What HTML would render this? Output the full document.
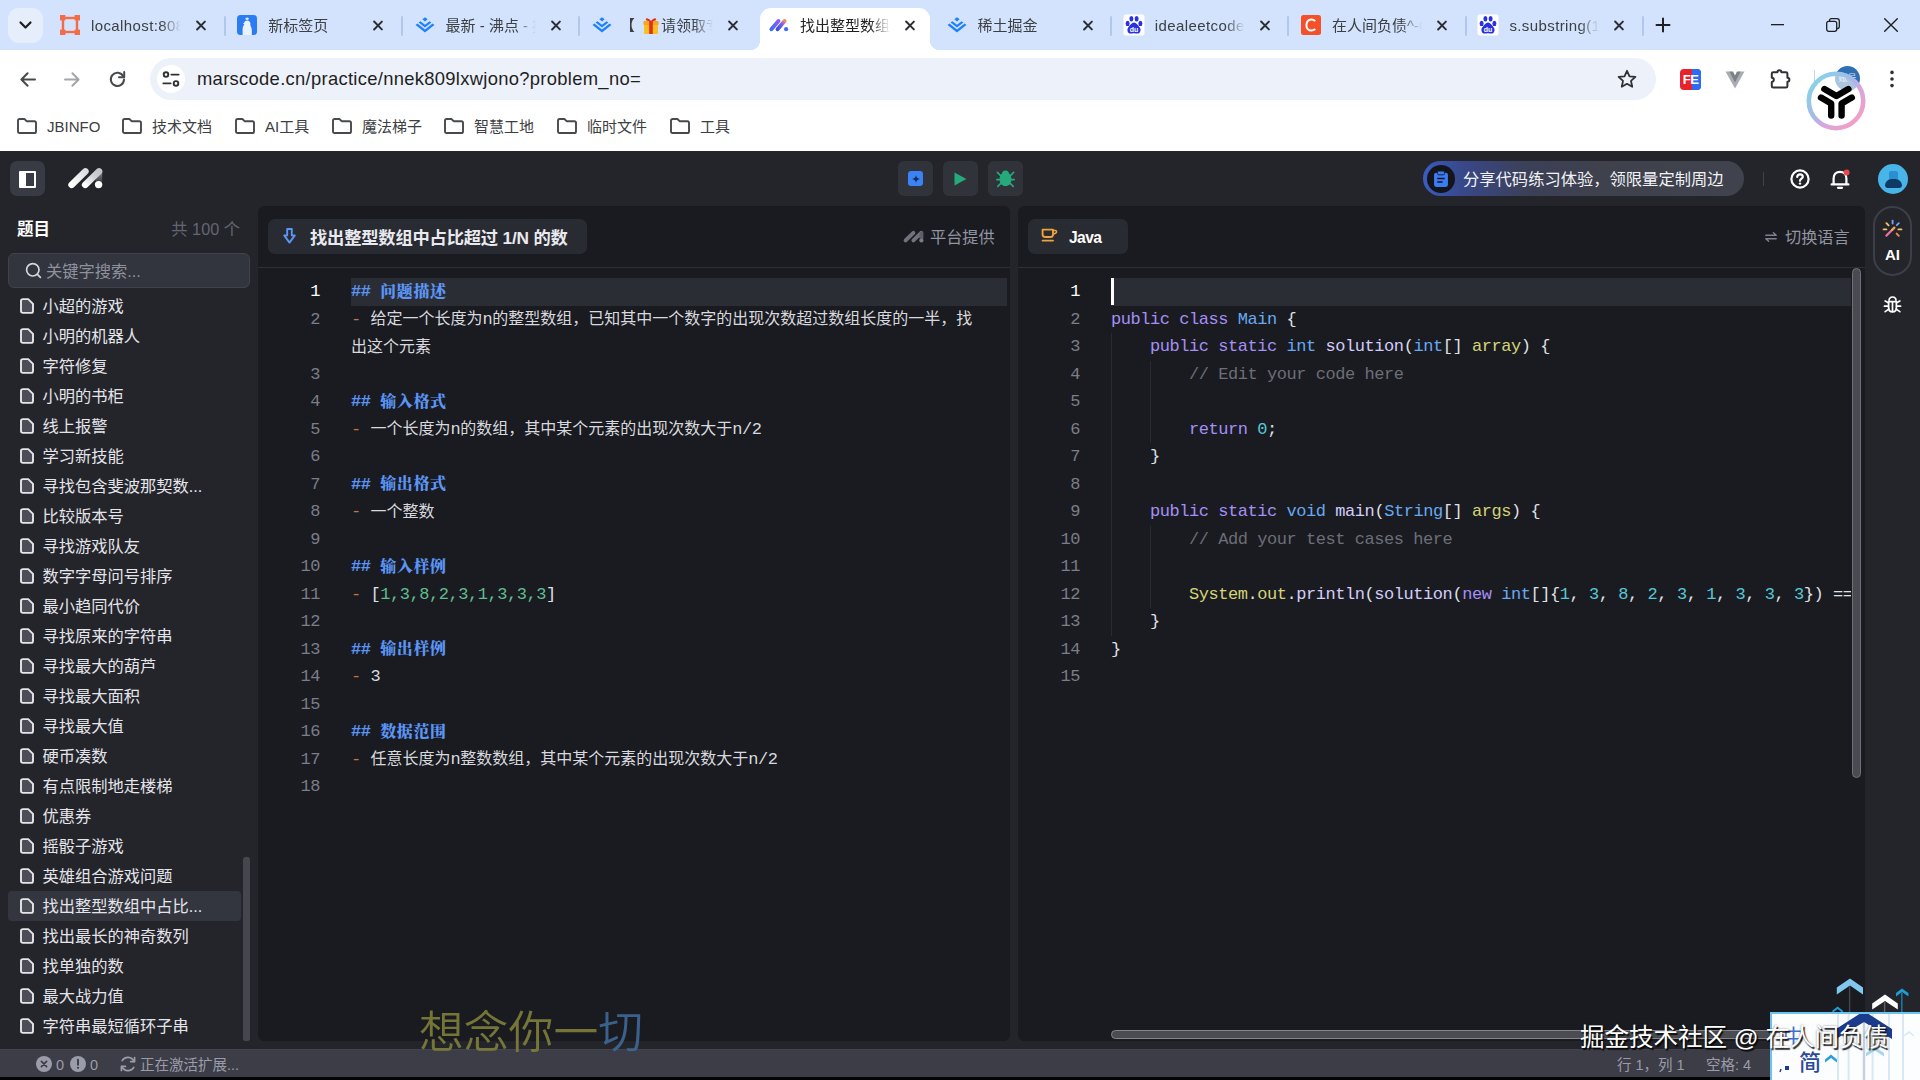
<!DOCTYPE html>
<html lang="zh-CN">
<head>
<meta charset="utf-8">
<title>找出整型数组中占比超过 1/N 的数</title>
<style>
*{box-sizing:border-box;margin:0;padding:0}
html,body{width:1920px;height:1080px;overflow:hidden;background:#fff}
body{position:relative;font-family:"Liberation Sans","Noto Sans CJK SC",sans-serif;color:#1f1f1f}
.abs{position:absolute}
svg{display:block;position:absolute;overflow:visible}
/* ---------- browser chrome ---------- */
#tabbar{position:absolute;left:0;top:0;width:1920px;height:50px;background:#d3e3fd}
#toolbar{position:absolute;left:0;top:50px;width:1920px;height:56px;background:#fff;border-radius:10px 10px 0 0}
#bookmarks{position:absolute;left:0;top:106px;width:1920px;height:45px;background:#fff}
.tsearch{position:absolute;left:8px;top:8px;width:35px;height:35px;border-radius:11px;background:#e6eefc}
.tab{position:absolute;top:8px;height:42px;width:177px}
.tab .tt{position:absolute;left:44px;top:8px;width:90px;height:22px;overflow:hidden;white-space:nowrap;font-size:15px;line-height:20px;color:#3c4043;
 -webkit-mask-image:linear-gradient(90deg,#000 78%,transparent 100%);mask-image:linear-gradient(90deg,#000 78%,transparent 100%)}
.tab .tx{position:absolute;left:146px;top:9px;width:16px;height:16px}
.tab .tx:before,.tab .tx:after{content:"";position:absolute;left:7px;top:1.5px;width:1.9px;height:13px;background:#2b2f33;transform:rotate(45deg);border-radius:1px}
.tab .tx:after{transform:rotate(-45deg)}
.tab .fav{position:absolute;left:11px;top:7px;width:20px;height:20px}
.tsep{position:absolute;top:15.5px;width:2px;height:20px;background:#b3c6ec;border-radius:1px}
#acttab{position:absolute;left:760px;top:8px;width:170px;height:42px;background:#fff;border-radius:11px 11px 0 0}
#acttab:before,#acttab:after{content:"";position:absolute;bottom:0;width:10px;height:10px}
#acttab:before{left:-10px;background:radial-gradient(circle at 0 0,transparent 10px,#fff 10.5px)}
#acttab:after{right:-10px;background:radial-gradient(circle at 100% 0,transparent 10px,#fff 10.5px)}
.urlpill{position:absolute;left:150px;top:8px;width:1506px;height:42px;border-radius:21px;background:#edf1fa}
.url{position:absolute;left:197px;top:16.5px;font-size:18.4px;line-height:24px;color:#1f1f1f;white-space:nowrap;letter-spacing:0.3px}
.bm{position:absolute;top:10px;height:22px;font-size:15px;line-height:22px;color:#3c4043;white-space:nowrap}
.bm svg{left:-30px;top:1.8px}
/* ---------- app ---------- */
#app{position:absolute;left:0;top:151px;width:1920px;height:929px;background:#24252a;color:#e6e6ea;overflow:hidden}

/* header */
.hbtn{position:absolute;top:10px;width:35px;height:35px;border-radius:6px;background:#31333b}
.side-title{position:absolute;left:17px;top:66px;font-size:16.5px;font-weight:700;line-height:24px;color:#fff}
.side-count{position:absolute;right:1680px;top:66px;font-size:16.25px;line-height:24px;color:#636673;white-space:nowrap}
.search{position:absolute;left:8px;top:102px;width:242px;height:35px;border-radius:6px;background:#32343e;border:1px solid #40424d}
.search span{position:absolute;left:37px;top:5px;font-size:16.25px;line-height:24px;color:#8e919d;white-space:nowrap}
.li{position:absolute;left:8px;width:233px;height:30px;border-radius:4px;font-size:16.25px;line-height:30px;color:#e4e5ea;white-space:nowrap}
.li span{position:absolute;left:34.5px;top:-0.5px}
.li svg{left:11.7px;top:7.3px}
.li.sel{background:#34363f}
.panel{position:absolute;top:55px;height:835px;background:#1a1b20;border-radius:6px;overflow:hidden}
.phead{position:absolute;left:0;top:0;right:0;height:62px;border-bottom:1px solid #2d2f37}
.ptab{position:absolute;top:13px;height:35px;border-radius:7px;background:#292b32}
.code{position:absolute;left:0;right:0;font-family:"Liberation Mono","Noto Sans CJK SC",monospace;font-size:17px;letter-spacing:-0.45px;white-space:pre;color:#d8d9de}
.code .ln{position:absolute;height:27.5px;line-height:27.5px}
.code .no{position:absolute;height:27.5px;line-height:27.5px;text-align:right;color:#7b7d89;width:60px}
.code .no.act{color:#fff}
.code .c{letter-spacing:0;font-size:16px;font-family:"Liberation Sans","Noto Sans CJK SC",sans-serif;line-height:0;position:relative;top:0.5px}
.code .hl{position:absolute;height:27.5px;background:#2b2d35}
.h{color:#5b95f6;font-weight:700}
.h .c{font-family:"Liberation Serif","Noto Serif CJK SC",serif;font-weight:900;letter-spacing:0.6px}
.d{color:#c9733d}
.g{color:#5fbe8f}
.kw{color:#a48ff5}.ty{color:#66a9f3}.fn{color:#d3cdfb}.pa{color:#d3d479}.cm{color:#6c6e78}.nu{color:#56c9d6}.pu{color:#dfe0e6}
.guide{position:absolute;width:1px;background:#2a2b32}
.status{position:absolute;left:0;top:898px;width:1920px;height:28.5px;background:#3c3d47;border-top:1px solid #43444e;font-size:14.5px;line-height:28px;color:#9a9ca9;white-space:nowrap}
.status span{position:absolute;top:0.5px}
</style>
</head>
<body>
<div id="tabbar">
  <div class="tsearch"><svg style="left:11px;top:13px" width="13" height="9" viewBox="0 0 13 9"><path d="M1.5 1.5 L6.5 6.5 L11.5 1.5" fill="none" stroke="#1f1f1f" stroke-width="2.2" stroke-linecap="round" stroke-linejoin="round"/></svg></div>
  <div id="acttab"></div>
  <div class="tab" style="left:47.0px"><svg class="fav" style="left:13px" width="20" height="20" viewBox="0 0 20 20"><rect x="3" y="3" width="14" height="14" fill="none" stroke="#f26d47" stroke-width="2.4"/><rect x="0" y="0" width="5.4" height="5.4" fill="#f26d47"/><rect x="14.6" y="0" width="5.4" height="5.4" fill="#f26d47"/><rect x="0" y="14.6" width="5.4" height="5.4" fill="#f26d47"/><rect x="14.6" y="14.6" width="5.4" height="5.4" fill="#f26d47"/></svg><div class="tt" style="color:#3c4043;letter-spacing:0.4px">localhost:8080</div><div class="tx"></div></div>
  <div class="tab" style="left:224.3px"><svg class="fav" style="left:13px" width="20" height="20" viewBox="0 0 20 20"><rect x="0" y="0" width="20" height="20" rx="3.5" fill="#2b7cf2"/><path d="M5.6 20 V14.6 C5.6 12 6.4 10.4 7.4 9.4 L6 8.6 L7.2 7.8 C7.6 6.2 8.8 5.4 10.2 5.4 C12.2 5.4 13.4 6.8 13.4 8.6 C13.4 9.6 13.2 10.2 13.6 11 C14.4 12.4 14.8 13.6 14.8 15.4 V20 Z" fill="#e9f3ff"/><path d="M8.4 2.6 L9.3 3.5 L10.1 2 L10.9 3.5 L11.8 2.6 L11.4 4.8 H8.8 Z" fill="#fff"/></svg><div class="tt" style="color:#3c4043">新标签页</div><div class="tx"></div></div>
  <div class="tab" style="left:401.6px"><svg class="fav" style="left:13px" width="20" height="20" viewBox="0 0 20 20"><path d="M10 2.2 L12.6 4.3 L10 6.4 L7.4 4.3 Z" fill="#1e80ff"/><path d="M3.6 7.6 L10 12.6 L16.4 7.6 L14.6 6.2 L10 9.8 L5.4 6.2 Z" fill="#1e80ff"/><path d="M0.6 10 L10 17.4 L19.4 10 L17.6 8.6 L10 14.5 L2.4 8.6 Z" fill="#1e80ff"/></svg><div class="tt" style="color:#3c4043">最新 - 沸点 - 掘金</div><div class="tx"></div></div>
  <div class="tab" style="left:579.0px"><svg class="fav" style="left:13px" width="20" height="20" viewBox="0 0 20 20"><path d="M10 2.2 L12.6 4.3 L10 6.4 L7.4 4.3 Z" fill="#1e80ff"/><path d="M3.6 7.6 L10 12.6 L16.4 7.6 L14.6 6.2 L10 9.8 L5.4 6.2 Z" fill="#1e80ff"/><path d="M0.6 10 L10 17.4 L19.4 10 L17.6 8.6 L10 14.5 L2.4 8.6 Z" fill="#1e80ff"/></svg><div class="tt" style="color:#3c4043"><span style="margin-left:-3px">【</span><span style="display:inline-block;width:26px"></span>请领取专属<svg style="position:absolute;left:20px;top:1px" width="16" height="18" viewBox="0 0 16 18"><rect x="1" y="6" width="14" height="11" rx="1" fill="#fbbf24"/><rect x="0.4" y="4" width="15.2" height="4" rx="1" fill="#f5a623"/><rect x="6.2" y="4" width="3.6" height="13" fill="#e0301e"/><path d="M8 4 C5 0 2 1 3 3 C3.6 4 6 4 8 4 C10 4 12.4 4 13 3 C14 1 11 0 8 4 Z" fill="#e0301e"/></svg></div><div class="tx"></div></div>
  <div class="tab" style="left:756.0px"><svg class="fav" style="left:13px" width="22" height="20" viewBox="0 0 22 20"><defs><linearGradient id="mg1" x1="0" y1="1" x2="1" y2="0"><stop offset="0" stop-color="#3f6bf6"/><stop offset="1" stop-color="#8a5cf6"/></linearGradient><linearGradient id="mg2" x1="0" y1="1" x2="1" y2="0"><stop offset="0" stop-color="#3a4fe0"/><stop offset="0.6" stop-color="#7b5cf0"/><stop offset="1" stop-color="#f08a6a"/></linearGradient></defs><path d="M2.6 14.6 L10.4 5.6" stroke="url(#mg1)" stroke-width="4.3" stroke-linecap="round" fill="none"/><path d="M9.4 14.6 L17.2 5.6" stroke="url(#mg2)" stroke-width="4.3" stroke-linecap="round" fill="none"/><circle cx="18.8" cy="14.6" r="2.3" fill="#3f6bf6"/></svg><div class="tt" style="color:#1f1f1f">找出整型数组中占比</div><div class="tx"></div></div>
  <div class="tab" style="left:933.5px"><svg class="fav" style="left:13px" width="20" height="20" viewBox="0 0 20 20"><path d="M10 2.2 L12.6 4.3 L10 6.4 L7.4 4.3 Z" fill="#1e80ff"/><path d="M3.6 7.6 L10 12.6 L16.4 7.6 L14.6 6.2 L10 9.8 L5.4 6.2 Z" fill="#1e80ff"/><path d="M0.6 10 L10 17.4 L19.4 10 L17.6 8.6 L10 14.5 L2.4 8.6 Z" fill="#1e80ff"/></svg><div class="tt" style="color:#3c4043">稀土掘金</div><div class="tx"></div></div>
  <div class="tab" style="left:1110.8px"><svg class="fav" style="left:13px" width="20" height="20" viewBox="0 0 20 20"><rect x="-0.5" y="-0.5" width="21" height="21" rx="2.5" fill="#fff"/><ellipse cx="3.6" cy="8.4" rx="2" ry="2.7" fill="#2932e1"/><ellipse cx="7.4" cy="3.8" rx="2" ry="2.7" fill="#2932e1"/><ellipse cx="12.6" cy="3.8" rx="2" ry="2.7" fill="#2932e1"/><ellipse cx="16.4" cy="8.4" rx="2" ry="2.7" fill="#2932e1"/><path d="M10 7.6 C12.4 7.6 13.4 10 15.4 12 C17.6 14.2 16.6 18.6 13.4 18.6 C12 18.6 11.2 18.2 10 18.2 C8.8 18.2 8 18.6 6.6 18.6 C3.4 18.6 2.4 14.2 4.6 12 C6.6 10 7.6 7.6 10 7.6 Z" fill="#2932e1"/><text x="10" y="16.6" font-size="7" font-weight="700" text-anchor="middle" fill="#fff" font-family="Liberation Sans, sans-serif">du</text></svg><div class="tt" style="color:#3c4043;letter-spacing:0.4px">idealeetcode</div><div class="tx"></div></div>
  <div class="tab" style="left:1288.0px"><svg class="fav" style="left:13px" width="20" height="20" viewBox="0 0 20 20"><rect x="0" y="0" width="20" height="20" rx="2.5" fill="#f4502a"/><path d="M14.2 6.2 C13.2 5 12 4.4 10.4 4.4 C7.4 4.4 5.4 6.8 5.4 10 C5.4 13.2 7.4 15.6 10.4 15.6 C12 15.6 13.2 15 14.2 13.8" fill="none" stroke="#fff" stroke-width="2"/></svg><div class="tt" style="color:#3c4043">在人间负债^-C</div><div class="tx"></div></div>
  <div class="tab" style="left:1465.4px"><svg class="fav" style="left:13px" width="20" height="20" viewBox="0 0 20 20"><rect x="-0.5" y="-0.5" width="21" height="21" rx="2.5" fill="#fff"/><ellipse cx="3.6" cy="8.4" rx="2" ry="2.7" fill="#2932e1"/><ellipse cx="7.4" cy="3.8" rx="2" ry="2.7" fill="#2932e1"/><ellipse cx="12.6" cy="3.8" rx="2" ry="2.7" fill="#2932e1"/><ellipse cx="16.4" cy="8.4" rx="2" ry="2.7" fill="#2932e1"/><path d="M10 7.6 C12.4 7.6 13.4 10 15.4 12 C17.6 14.2 16.6 18.6 13.4 18.6 C12 18.6 11.2 18.2 10 18.2 C8.8 18.2 8 18.6 6.6 18.6 C3.4 18.6 2.4 14.2 4.6 12 C6.6 10 7.6 7.6 10 7.6 Z" fill="#2932e1"/><text x="10" y="16.6" font-size="7" font-weight="700" text-anchor="middle" fill="#fff" font-family="Liberation Sans, sans-serif">du</text></svg><div class="tt" style="color:#3c4043;letter-spacing:0.4px">s.substring(1</div><div class="tx"></div></div>
  <div class="tsep" style="left:223.5px"></div>
  <div class="tsep" style="left:400.8px"></div>
  <div class="tsep" style="left:578.2px"></div>
  <div class="tsep" style="left:1110.0px"></div>
  <div class="tsep" style="left:1287.2px"></div>
  <div class="tsep" style="left:1464.6px"></div>
  <div class="tsep" style="left:1641.9px"></div>
  <svg style="left:1656px;top:18px" width="14" height="14" viewBox="0 0 14 14"><path d="M7 0.5 V13.5 M0.5 7 H13.5" stroke="#1f1f1f" stroke-width="2" stroke-linecap="round"/></svg>
  <svg style="left:1771px;top:24px" width="13" height="2" viewBox="0 0 13 2"><rect width="13" height="1.3" fill="#1f1f1f"/></svg>
  <svg style="left:1826px;top:18px" width="14" height="14" viewBox="0 0 14 14"><rect x="0.7" y="3.3" width="10" height="10" rx="2" fill="none" stroke="#1f1f1f" stroke-width="1.3"/><path d="M3.5 3 V2.6 Q3.5 0.7 5.4 0.7 H11 Q13.3 0.7 13.3 3 V8.6 Q13.3 10.5 11.4 10.5 H11" fill="none" stroke="#1f1f1f" stroke-width="1.3"/></svg>
  <svg style="left:1884px;top:18px" width="14" height="14" viewBox="0 0 14 14"><path d="M0.7 0.7 L13.3 13.3 M13.3 0.7 L0.7 13.3" stroke="#1f1f1f" stroke-width="1.4" stroke-linecap="round"/></svg>
</div>
<div id="toolbar">
  <svg style="left:20px;top:22px" width="16" height="15" viewBox="0 0 16 15"><path d="M15 7.5 H2 M7.6 1.2 L1.4 7.5 L7.6 13.8" fill="none" stroke="#474a4d" stroke-width="2" stroke-linecap="round" stroke-linejoin="round"/></svg>
  <svg style="left:64px;top:22px" width="16" height="15" viewBox="0 0 16 15"><path d="M1 7.5 H14 M8.4 1.2 L14.6 7.5 L8.4 13.8" fill="none" stroke="#a3a6aa" stroke-width="2" stroke-linecap="round" stroke-linejoin="round"/></svg>
  <svg style="left:109px;top:21px" width="17" height="17" viewBox="0 0 17 17"><path d="M14.2 5.2 A6.6 6.6 0 1 0 15 8.6" fill="none" stroke="#474a4d" stroke-width="2" stroke-linecap="round"/><path d="M15.2 1 V6.2 H10" fill="none" stroke="#474a4d" stroke-width="2" stroke-linecap="round" stroke-linejoin="round"/></svg>
  <div class="urlpill"></div>
  <div class="abs" style="left:157px;top:15px;width:28px;height:28px;border-radius:14px;background:#fff"></div>
  <svg style="left:162px;top:21px" width="18" height="16" viewBox="0 0 18 16"><circle cx="4" cy="3.6" r="2.3" fill="none" stroke="#303134" stroke-width="1.9"/><path d="M9.4 3.6 H16.6" stroke="#303134" stroke-width="1.9" stroke-linecap="round"/><circle cx="14" cy="12.4" r="2.3" fill="none" stroke="#303134" stroke-width="1.9"/><path d="M1.4 12.4 H8.6" stroke="#303134" stroke-width="1.9" stroke-linecap="round"/></svg>
  <div class="url">marscode.cn/practice/nnek809lxwjono?problem_no=</div>
  <svg style="left:1617px;top:19px" width="20" height="20" viewBox="0 0 20 20"><path d="M10 1.8 L12.5 7.3 L18.4 7.9 L14 11.9 L15.2 17.8 L10 14.8 L4.8 17.8 L6 11.9 L1.6 7.9 L7.5 7.3 Z" fill="none" stroke="#303134" stroke-width="1.8" stroke-linejoin="round"/></svg>
  <div class="abs" style="left:1680px;top:19px;width:21px;height:21px;border-radius:4px;background:#e8212b;overflow:hidden"><div class="abs" style="right:0;top:0;width:9px;height:21px;background:#2a6df4"></div><div class="abs" style="left:0;top:2px;width:21px;text-align:center;font-size:13px;font-weight:700;line-height:17px;color:#fff;letter-spacing:-0.5px">FE</div></div>
  <svg style="left:1725px;top:21px" width="20" height="18" viewBox="0 0 20 18"><path d="M0.5 0.5 H5.5 L10 9.5 L14.5 0.5 H19.5 L10 17.5 Z" fill="#a9adb2"/><path d="M4.4 0.5 H8 L10 4.6 L12 0.5 H15.6 L10 11.4 Z" fill="#7d8187"/></svg>
  <svg style="left:1770px;top:17.5px" width="22" height="22" viewBox="0 0 22 22"><path d="M1.8 9.8 V5.6 Q1.8 4.2 3.2 4.2 H7.4 A2 2 0 0 1 11.4 4.2 H16 Q17.4 4.2 17.4 5.6 V9.8 A2 2 0 0 1 17.4 13.8 V18.2 Q17.4 19.6 16 19.6 H3.2 Q1.8 19.6 1.8 18.2 V13.9 A2.05 2.05 0 0 0 1.8 9.8 Z" fill="none" stroke="#303134" stroke-width="2" stroke-linejoin="round"/></svg>
  <div class="abs" style="left:1814px;top:20px;width:1px;height:18px;background:#c7d3ea"></div>
  <div class="abs" style="left:1835px;top:16px;width:25px;height:25px;border-radius:13px;background:#2f6fb4;color:#cfe0f3;font-size:9px;line-height:25px;text-align:center">账号</div>
  <svg style="left:1889px;top:20px" width="6" height="18" viewBox="0 0 6 18"><circle cx="3" cy="2.4" r="1.8" fill="#303134"/><circle cx="3" cy="9" r="1.8" fill="#303134"/><circle cx="3" cy="15.6" r="1.8" fill="#303134"/></svg>
</div>
<div id="bookmarks">
  <div class="bm" style="left:47px"><svg width="20" height="16" viewBox="0 0 20 16"><path d="M1 2.6 Q1 1 2.6 1 H7.4 L9.6 3.2 H17.4 Q19 3.2 19 4.8 V13.4 Q19 15 17.4 15 H2.6 Q1 15 1 13.4 Z" fill="none" stroke="#474a4d" stroke-width="1.9" stroke-linejoin="round"/></svg>JBINFO</div>
  <div class="bm" style="left:152px"><svg width="20" height="16" viewBox="0 0 20 16"><path d="M1 2.6 Q1 1 2.6 1 H7.4 L9.6 3.2 H17.4 Q19 3.2 19 4.8 V13.4 Q19 15 17.4 15 H2.6 Q1 15 1 13.4 Z" fill="none" stroke="#474a4d" stroke-width="1.9" stroke-linejoin="round"/></svg>技术文档</div>
  <div class="bm" style="left:265px"><svg width="20" height="16" viewBox="0 0 20 16"><path d="M1 2.6 Q1 1 2.6 1 H7.4 L9.6 3.2 H17.4 Q19 3.2 19 4.8 V13.4 Q19 15 17.4 15 H2.6 Q1 15 1 13.4 Z" fill="none" stroke="#474a4d" stroke-width="1.9" stroke-linejoin="round"/></svg>AI工具</div>
  <div class="bm" style="left:362px"><svg width="20" height="16" viewBox="0 0 20 16"><path d="M1 2.6 Q1 1 2.6 1 H7.4 L9.6 3.2 H17.4 Q19 3.2 19 4.8 V13.4 Q19 15 17.4 15 H2.6 Q1 15 1 13.4 Z" fill="none" stroke="#474a4d" stroke-width="1.9" stroke-linejoin="round"/></svg>魔法梯子</div>
  <div class="bm" style="left:474px"><svg width="20" height="16" viewBox="0 0 20 16"><path d="M1 2.6 Q1 1 2.6 1 H7.4 L9.6 3.2 H17.4 Q19 3.2 19 4.8 V13.4 Q19 15 17.4 15 H2.6 Q1 15 1 13.4 Z" fill="none" stroke="#474a4d" stroke-width="1.9" stroke-linejoin="round"/></svg>智慧工地</div>
  <div class="bm" style="left:587px"><svg width="20" height="16" viewBox="0 0 20 16"><path d="M1 2.6 Q1 1 2.6 1 H7.4 L9.6 3.2 H17.4 Q19 3.2 19 4.8 V13.4 Q19 15 17.4 15 H2.6 Q1 15 1 13.4 Z" fill="none" stroke="#474a4d" stroke-width="1.9" stroke-linejoin="round"/></svg>临时文件</div>
  <div class="bm" style="left:700px"><svg width="20" height="16" viewBox="0 0 20 16"><path d="M1 2.6 Q1 1 2.6 1 H7.4 L9.6 3.2 H17.4 Q19 3.2 19 4.8 V13.4 Q19 15 17.4 15 H2.6 Q1 15 1 13.4 Z" fill="none" stroke="#474a4d" stroke-width="1.9" stroke-linejoin="round"/></svg>工具</div>
</div>
<div id="app">
  <div class="abs" style="left:10px;top:10px;width:35px;height:35px;border-radius:7px;background:#383a44"><div class="abs" style="left:8.75px;top:9.5px;width:17.5px;height:17.5px;border:2.3px solid #fff;border-radius:1px"><div class="abs" style="left:0;top:0;width:5.5px;height:13px;background:#fff"></div></div></div>
<svg style="left:67px;top:16px" width="37" height="22" viewBox="0 0 37 22"><defs><linearGradient id="lg1" x1="0" y1="1" x2="1" y2="0"><stop offset="0" stop-color="#fff"/><stop offset="1" stop-color="#dcdde1"/></linearGradient><linearGradient id="lg2" x1="0" y1="1" x2="1" y2="0"><stop offset="0" stop-color="#fff"/><stop offset="0.6" stop-color="#d0d1d6"/><stop offset="1" stop-color="#c4c5cb"/></linearGradient><linearGradient id="lg3" x1="0" y1="0" x2="0" y2="1"><stop offset="0" stop-color="#a5a6ad"/><stop offset="1" stop-color="#6a6c75" stop-opacity="0.4"/></linearGradient></defs><path d="M30 3 L34.6 2.4 Q35.2 3.4 35.2 5 V15 L28.4 14 Z" fill="url(#lg3)"/><path d="M4.6 17.8 L18.4 4.4" stroke="url(#lg1)" stroke-width="6.6" stroke-linecap="round"/><path d="M18.2 17.8 L32 4.4" stroke="url(#lg2)" stroke-width="6.6" stroke-linecap="round"/><circle cx="31.6" cy="17.6" r="3.7" fill="#fff"/></svg>
<div class="hbtn" style="left:898px"><div class="abs" style="left:10px;top:10px;width:15px;height:15px;border-radius:3px;background:#3b82f6"></div><svg style="left:13.5px;top:13.5px" width="8" height="8" viewBox="0 0 8 8"><path d="M4 0 Q4.4 3.6 8 4 Q4.4 4.4 4 8 Q3.6 4.4 0 4 Q3.6 3.6 4 0Z" fill="#1e2a55"/></svg></div>
<div class="hbtn" style="left:943px"><svg style="left:11px;top:10.5px" width="13" height="14" viewBox="0 0 13 14"><path d="M0.5 0.6 L12.4 7 L0.5 13.4 Z" fill="#26a97b"/></svg></div>
<div class="hbtn" style="left:988px"><svg style="left:8px;top:8px" width="19" height="19" viewBox="0 0 19 19"><path d="M9.5 1.4 C11.8 1.4 13 3 13 4.6 C14.8 5.8 15.4 8 15.4 10.4 C15.4 14 13.2 17 9.5 17 C5.8 17 3.6 14 3.6 10.4 C3.6 8 4.2 5.8 6 4.6 C6 3 7.2 1.4 9.5 1.4Z" fill="#26a97b"/><path d="M4.6 6.6 L1.4 3.4 M14.4 6.6 L17.6 3.4 M3.8 10.6 H0.8 M15.2 10.6 H18.2 M4.8 14.4 L1.8 17.4 M14.2 14.4 L17.2 17.4" stroke="#26a97b" stroke-width="1.6" stroke-linecap="round"/></svg></div>
<div class="abs" style="left:1423px;top:10px;width:321px;height:35px;border-radius:18px;background:linear-gradient(90deg,#3a5cc4 0%,#38488a 12%,#3c4058 32%,#3f414d 55%,#40424d 100%)"><div class="abs" style="left:3.5px;top:3.5px;width:28px;height:28px;border-radius:14px;background:#14151b"></div><svg style="left:10.5px;top:9.5px" width="14" height="16" viewBox="0 0 13 15"><rect x="0" y="1.6" width="13" height="13.4" rx="2" fill="#3b7cf6"/><rect x="3.2" y="0" width="6.6" height="3.6" rx="1.2" fill="#3b7cf6" stroke="#14151b" stroke-width="0.8"/><path d="M3 7 H10 M3 10.4 H8" stroke="#14151b" stroke-width="1.4"/></svg><div class="abs" style="left:40px;top:5.5px;font-size:16.3px;line-height:24px;color:#f2f3f7;white-space:nowrap">分享代码练习体验，领限量定制周边</div></div>
<div class="abs" style="left:1763px;top:21px;width:1px;height:14px;background:#3f414c"></div>
<svg style="left:1790px;top:18px" width="20" height="20" viewBox="0 0 20 20"><circle cx="10" cy="10" r="8.6" fill="none" stroke="#fff" stroke-width="2.2"/><path d="M7.2 8 C7.2 6.2 8.4 5.3 10 5.3 C11.6 5.3 12.8 6.3 12.8 7.8 C12.8 9.6 10 9.8 10 11.8" fill="none" stroke="#fff" stroke-width="2.2" stroke-linecap="round"/><circle cx="10" cy="14.6" r="1.2" fill="#fff"/></svg>
<svg style="left:1830px;top:18px" width="20" height="21" viewBox="0 0 20 21"><path d="M3.6 15 V9.4 C3.6 5.4 6.2 2.8 10 2.8 C13.8 2.8 16.4 5.4 16.4 9.4 V15 M1.6 15.4 H18.4 M8 18.8 H12" fill="none" stroke="#fff" stroke-width="2.2" stroke-linecap="round" stroke-linejoin="round"/><circle cx="16.6" cy="3.6" r="3" fill="#e5484d"/></svg>
<div class="abs" style="left:1878px;top:13px;width:30px;height:30px;border-radius:15px;background:#48b4e8;overflow:hidden"><div class="abs" style="left:10.5px;top:7px;width:9px;height:9px;border-radius:2px;background:#2a8fd0"></div><div class="abs" style="left:6.5px;top:14.5px;width:17px;height:9px;border-radius:8px 8px 3px 3px;background:#0f3a66"></div></div>
<div class="side-title">题目</div><div class="side-count">共 100 个</div>
<div class="search"><svg style="left:16px;top:8px" width="17" height="17" viewBox="0 0 17 17"><circle cx="7.8" cy="7.8" r="6.2" fill="none" stroke="#d5d6dc" stroke-width="1.7"/><path d="M12.4 12.4 L15.4 15.4" stroke="#d5d6dc" stroke-width="1.7" stroke-linecap="round"/></svg><span>关键字搜索...</span></div>
<div class="li" style="top:140px"><svg width="14" height="16" viewBox="0 0 14 16"><path d="M1 3 Q1 1.1 3 1.1 H8.2 L13 5.9 V13 Q13 14.9 11 14.9 H3 Q1 14.9 1 13 Z" fill="#4b4d57" stroke="#e6e6ea" stroke-width="1.9" stroke-linejoin="round"/></svg><span>小超的游戏</span></div>
<div class="li" style="top:170px"><svg width="14" height="16" viewBox="0 0 14 16"><path d="M1 3 Q1 1.1 3 1.1 H8.2 L13 5.9 V13 Q13 14.9 11 14.9 H3 Q1 14.9 1 13 Z" fill="#4b4d57" stroke="#e6e6ea" stroke-width="1.9" stroke-linejoin="round"/></svg><span>小明的机器人</span></div>
<div class="li" style="top:200px"><svg width="14" height="16" viewBox="0 0 14 16"><path d="M1 3 Q1 1.1 3 1.1 H8.2 L13 5.9 V13 Q13 14.9 11 14.9 H3 Q1 14.9 1 13 Z" fill="#4b4d57" stroke="#e6e6ea" stroke-width="1.9" stroke-linejoin="round"/></svg><span>字符修复</span></div>
<div class="li" style="top:230px"><svg width="14" height="16" viewBox="0 0 14 16"><path d="M1 3 Q1 1.1 3 1.1 H8.2 L13 5.9 V13 Q13 14.9 11 14.9 H3 Q1 14.9 1 13 Z" fill="#4b4d57" stroke="#e6e6ea" stroke-width="1.9" stroke-linejoin="round"/></svg><span>小明的书柜</span></div>
<div class="li" style="top:260px"><svg width="14" height="16" viewBox="0 0 14 16"><path d="M1 3 Q1 1.1 3 1.1 H8.2 L13 5.9 V13 Q13 14.9 11 14.9 H3 Q1 14.9 1 13 Z" fill="#4b4d57" stroke="#e6e6ea" stroke-width="1.9" stroke-linejoin="round"/></svg><span>线上报警</span></div>
<div class="li" style="top:290px"><svg width="14" height="16" viewBox="0 0 14 16"><path d="M1 3 Q1 1.1 3 1.1 H8.2 L13 5.9 V13 Q13 14.9 11 14.9 H3 Q1 14.9 1 13 Z" fill="#4b4d57" stroke="#e6e6ea" stroke-width="1.9" stroke-linejoin="round"/></svg><span>学习新技能</span></div>
<div class="li" style="top:320px"><svg width="14" height="16" viewBox="0 0 14 16"><path d="M1 3 Q1 1.1 3 1.1 H8.2 L13 5.9 V13 Q13 14.9 11 14.9 H3 Q1 14.9 1 13 Z" fill="#4b4d57" stroke="#e6e6ea" stroke-width="1.9" stroke-linejoin="round"/></svg><span>寻找包含斐波那契数...</span></div>
<div class="li" style="top:350px"><svg width="14" height="16" viewBox="0 0 14 16"><path d="M1 3 Q1 1.1 3 1.1 H8.2 L13 5.9 V13 Q13 14.9 11 14.9 H3 Q1 14.9 1 13 Z" fill="#4b4d57" stroke="#e6e6ea" stroke-width="1.9" stroke-linejoin="round"/></svg><span>比较版本号</span></div>
<div class="li" style="top:380px"><svg width="14" height="16" viewBox="0 0 14 16"><path d="M1 3 Q1 1.1 3 1.1 H8.2 L13 5.9 V13 Q13 14.9 11 14.9 H3 Q1 14.9 1 13 Z" fill="#4b4d57" stroke="#e6e6ea" stroke-width="1.9" stroke-linejoin="round"/></svg><span>寻找游戏队友</span></div>
<div class="li" style="top:410px"><svg width="14" height="16" viewBox="0 0 14 16"><path d="M1 3 Q1 1.1 3 1.1 H8.2 L13 5.9 V13 Q13 14.9 11 14.9 H3 Q1 14.9 1 13 Z" fill="#4b4d57" stroke="#e6e6ea" stroke-width="1.9" stroke-linejoin="round"/></svg><span>数字字母问号排序</span></div>
<div class="li" style="top:440px"><svg width="14" height="16" viewBox="0 0 14 16"><path d="M1 3 Q1 1.1 3 1.1 H8.2 L13 5.9 V13 Q13 14.9 11 14.9 H3 Q1 14.9 1 13 Z" fill="#4b4d57" stroke="#e6e6ea" stroke-width="1.9" stroke-linejoin="round"/></svg><span>最小趋同代价</span></div>
<div class="li" style="top:470px"><svg width="14" height="16" viewBox="0 0 14 16"><path d="M1 3 Q1 1.1 3 1.1 H8.2 L13 5.9 V13 Q13 14.9 11 14.9 H3 Q1 14.9 1 13 Z" fill="#4b4d57" stroke="#e6e6ea" stroke-width="1.9" stroke-linejoin="round"/></svg><span>寻找原来的字符串</span></div>
<div class="li" style="top:500px"><svg width="14" height="16" viewBox="0 0 14 16"><path d="M1 3 Q1 1.1 3 1.1 H8.2 L13 5.9 V13 Q13 14.9 11 14.9 H3 Q1 14.9 1 13 Z" fill="#4b4d57" stroke="#e6e6ea" stroke-width="1.9" stroke-linejoin="round"/></svg><span>寻找最大的葫芦</span></div>
<div class="li" style="top:530px"><svg width="14" height="16" viewBox="0 0 14 16"><path d="M1 3 Q1 1.1 3 1.1 H8.2 L13 5.9 V13 Q13 14.9 11 14.9 H3 Q1 14.9 1 13 Z" fill="#4b4d57" stroke="#e6e6ea" stroke-width="1.9" stroke-linejoin="round"/></svg><span>寻找最大面积</span></div>
<div class="li" style="top:560px"><svg width="14" height="16" viewBox="0 0 14 16"><path d="M1 3 Q1 1.1 3 1.1 H8.2 L13 5.9 V13 Q13 14.9 11 14.9 H3 Q1 14.9 1 13 Z" fill="#4b4d57" stroke="#e6e6ea" stroke-width="1.9" stroke-linejoin="round"/></svg><span>寻找最大值</span></div>
<div class="li" style="top:590px"><svg width="14" height="16" viewBox="0 0 14 16"><path d="M1 3 Q1 1.1 3 1.1 H8.2 L13 5.9 V13 Q13 14.9 11 14.9 H3 Q1 14.9 1 13 Z" fill="#4b4d57" stroke="#e6e6ea" stroke-width="1.9" stroke-linejoin="round"/></svg><span>硬币凑数</span></div>
<div class="li" style="top:620px"><svg width="14" height="16" viewBox="0 0 14 16"><path d="M1 3 Q1 1.1 3 1.1 H8.2 L13 5.9 V13 Q13 14.9 11 14.9 H3 Q1 14.9 1 13 Z" fill="#4b4d57" stroke="#e6e6ea" stroke-width="1.9" stroke-linejoin="round"/></svg><span>有点限制地走楼梯</span></div>
<div class="li" style="top:650px"><svg width="14" height="16" viewBox="0 0 14 16"><path d="M1 3 Q1 1.1 3 1.1 H8.2 L13 5.9 V13 Q13 14.9 11 14.9 H3 Q1 14.9 1 13 Z" fill="#4b4d57" stroke="#e6e6ea" stroke-width="1.9" stroke-linejoin="round"/></svg><span>优惠券</span></div>
<div class="li" style="top:680px"><svg width="14" height="16" viewBox="0 0 14 16"><path d="M1 3 Q1 1.1 3 1.1 H8.2 L13 5.9 V13 Q13 14.9 11 14.9 H3 Q1 14.9 1 13 Z" fill="#4b4d57" stroke="#e6e6ea" stroke-width="1.9" stroke-linejoin="round"/></svg><span>摇骰子游戏</span></div>
<div class="li" style="top:710px"><svg width="14" height="16" viewBox="0 0 14 16"><path d="M1 3 Q1 1.1 3 1.1 H8.2 L13 5.9 V13 Q13 14.9 11 14.9 H3 Q1 14.9 1 13 Z" fill="#4b4d57" stroke="#e6e6ea" stroke-width="1.9" stroke-linejoin="round"/></svg><span>英雄组合游戏问题</span></div>
<div class="li sel" style="top:740px"><svg width="14" height="16" viewBox="0 0 14 16"><path d="M1 3 Q1 1.1 3 1.1 H8.2 L13 5.9 V13 Q13 14.9 11 14.9 H3 Q1 14.9 1 13 Z" fill="#4b4d57" stroke="#e6e6ea" stroke-width="1.9" stroke-linejoin="round"/></svg><span>找出整型数组中占比...</span></div>
<div class="li" style="top:770px"><svg width="14" height="16" viewBox="0 0 14 16"><path d="M1 3 Q1 1.1 3 1.1 H8.2 L13 5.9 V13 Q13 14.9 11 14.9 H3 Q1 14.9 1 13 Z" fill="#4b4d57" stroke="#e6e6ea" stroke-width="1.9" stroke-linejoin="round"/></svg><span>找出最长的神奇数列</span></div>
<div class="li" style="top:800px"><svg width="14" height="16" viewBox="0 0 14 16"><path d="M1 3 Q1 1.1 3 1.1 H8.2 L13 5.9 V13 Q13 14.9 11 14.9 H3 Q1 14.9 1 13 Z" fill="#4b4d57" stroke="#e6e6ea" stroke-width="1.9" stroke-linejoin="round"/></svg><span>找单独的数</span></div>
<div class="li" style="top:830px"><svg width="14" height="16" viewBox="0 0 14 16"><path d="M1 3 Q1 1.1 3 1.1 H8.2 L13 5.9 V13 Q13 14.9 11 14.9 H3 Q1 14.9 1 13 Z" fill="#4b4d57" stroke="#e6e6ea" stroke-width="1.9" stroke-linejoin="round"/></svg><span>最大战力值</span></div>
<div class="li" style="top:860px"><svg width="14" height="16" viewBox="0 0 14 16"><path d="M1 3 Q1 1.1 3 1.1 H8.2 L13 5.9 V13 Q13 14.9 11 14.9 H3 Q1 14.9 1 13 Z" fill="#4b4d57" stroke="#e6e6ea" stroke-width="1.9" stroke-linejoin="round"/></svg><span>字符串最短循环子串</span></div>
<div class="abs" style="left:243px;top:706px;width:7px;height:184px;border-radius:2.5px;background:#45464e"></div>
<div class="panel" style="left:258px;width:752px"><div class="phead"><div class="ptab" style="left:10px;width:319px"><svg style="left:15px;top:9px" width="13" height="16" viewBox="0 0 13 16"><path d="M4.2 1 H8.8 V7.4 H11.8 L6.5 14.6 L1.2 7.4 H4.2 Z" fill="none" stroke="#5b95f6" stroke-width="1.9" stroke-linejoin="round"/></svg><div class="abs" style="left:42px;top:6.5px;font-size:17.3px;font-weight:700;line-height:25px;color:#e9eaef;white-space:nowrap;letter-spacing:-0.2px">找出整型数组中占比超过 1/N 的数</div></div><svg style="left:645px;top:24px" width="22" height="13" viewBox="0 0 22 13"><path d="M2.6 10.4 L10.4 2.8 M10.4 10.4 L18.2 2.8" stroke="#70737d" stroke-width="3.9" stroke-linecap="round"/><path d="M17 2 L20.4 1.4 V9 L16 8 Z" fill="#5d5f6a"/><circle cx="18.4" cy="10.4" r="2.1" fill="#7a7d87"/></svg><div class="abs" style="left:672px;top:18.5px;font-size:16.2px;line-height:25px;color:#9294a0;white-space:nowrap">平台提供</div></div>
<div class="code" style="top:72.2px">
<div class="hl" style="left:93px;top:-0.2px;width:656px"></div>
<div class="no act" style="left:2px;top:0.0px">1</div>
<div class="ln" style="left:93px;top:0.0px"><span class="h">## <span class="c">问题描述</span></span></div>
<div class="no" style="left:2px;top:27.5px">2</div>
<div class="ln" style="left:93px;top:27.5px"><span class="d">-</span> <span class="c">给定一个长度为</span>n<span class="c">的整型数组，已知其中一个数字的出现次数超过数组长度的一半，找</span></div>
<div class="ln" style="left:93px;top:55.0px"><span class="c">出这个元素</span></div>
<div class="no" style="left:2px;top:82.5px">3</div>
<div class="no" style="left:2px;top:110.0px">4</div>
<div class="ln" style="left:93px;top:110.0px"><span class="h">## <span class="c">输入格式</span></span></div>
<div class="no" style="left:2px;top:137.5px">5</div>
<div class="ln" style="left:93px;top:137.5px"><span class="d">-</span> <span class="c">一个长度为</span>n<span class="c">的数组，其中某个元素的出现次数大于</span>n/2</div>
<div class="no" style="left:2px;top:165.0px">6</div>
<div class="no" style="left:2px;top:192.5px">7</div>
<div class="ln" style="left:93px;top:192.5px"><span class="h">## <span class="c">输出格式</span></span></div>
<div class="no" style="left:2px;top:220.0px">8</div>
<div class="ln" style="left:93px;top:220.0px"><span class="d">-</span> <span class="c">一个整数</span></div>
<div class="no" style="left:2px;top:247.5px">9</div>
<div class="no" style="left:2px;top:275.0px">10</div>
<div class="ln" style="left:93px;top:275.0px"><span class="h">## <span class="c">输入样例</span></span></div>
<div class="no" style="left:2px;top:302.5px">11</div>
<div class="ln" style="left:93px;top:302.5px"><span class="d">-</span> <span class="pu">[</span><span class="g">1,3,8,2,3,1,3,3,3</span><span class="pu">]</span></div>
<div class="no" style="left:2px;top:330.0px">12</div>
<div class="no" style="left:2px;top:357.5px">13</div>
<div class="ln" style="left:93px;top:357.5px"><span class="h">## <span class="c">输出样例</span></span></div>
<div class="no" style="left:2px;top:385.0px">14</div>
<div class="ln" style="left:93px;top:385.0px"><span class="d">-</span> 3</div>
<div class="no" style="left:2px;top:412.5px">15</div>
<div class="no" style="left:2px;top:440.0px">16</div>
<div class="ln" style="left:93px;top:440.0px"><span class="h">## <span class="c">数据范围</span></span></div>
<div class="no" style="left:2px;top:467.5px">17</div>
<div class="ln" style="left:93px;top:467.5px"><span class="d">-</span> <span class="c">任意长度为</span>n<span class="c">整数数组，其中某个元素的出现次数大于</span>n/2</div>
<div class="no" style="left:2px;top:495.0px">18</div>
</div></div>
<div class="panel" style="left:1018px;width:847px"><div class="phead"><div class="ptab" style="left:10px;width:100px"><svg style="left:13px;top:9px" width="17" height="15" viewBox="0 0 17 15"><path d="M1.6 1.6 H12 V6.4 Q12 9 9.4 9 H4.2 Q1.6 9 1.6 6.4 Z" fill="none" stroke="#f0a23a" stroke-width="1.9" stroke-linejoin="round"/><path d="M12 2.6 H14.4 Q15.6 2.6 15.6 3.8 Q15.6 5.4 12.6 6" fill="none" stroke="#f0a23a" stroke-width="1.5"/><path d="M1.6 12.6 H12" stroke="#f0a23a" stroke-width="1.9" stroke-linecap="round"/></svg><div class="abs" style="left:41px;top:5.5px;font-size:15.6px;font-weight:700;line-height:25px;color:#fff;letter-spacing:-0.6px">Java</div></div><svg style="left:747px;top:26px" width="12" height="10" viewBox="0 0 12 10"><path d="M0.8 3.2 H11.2 L8.4 0.8 M11.2 6.8 H0.8 L3.6 9.2" fill="none" stroke="#7f828d" stroke-width="1.4" stroke-linecap="round" stroke-linejoin="round"/></svg><div class="abs" style="left:767px;top:19px;font-size:16.2px;line-height:25px;color:#9294a0;white-space:nowrap">切换语言</div></div>
<div class="code" style="top:72.2px;width:833px;overflow:hidden;height:760px">
<div class="hl" style="left:93px;top:-0.2px;width:752px"></div>
<div class="abs" style="left:93px;top:0.3px;width:2.5px;height:27px;background:#fff"></div>
<div class="guide" style="left:93px;top:55px;height:302.5px"></div>
<div class="guide" style="left:132px;top:82.5px;height:82.5px"></div>
<div class="guide" style="left:132px;top:247.5px;height:82.5px"></div>
<div class="no act" style="left:2px;top:0.0px">1</div>
<div class="no" style="left:2px;top:27.5px">2</div>
<div class="ln" style="left:93px;top:27.5px"><span class="kw">public</span> <span class="kw">class</span> <span class="ty">Main</span> <span class="pu">{</span></div>
<div class="no" style="left:2px;top:55.0px">3</div>
<div class="ln" style="left:93px;top:55.0px">    <span class="kw">public</span> <span class="kw">static</span> <span class="ty">int</span> <span class="fn">solution</span><span class="pu">(</span><span class="ty">int</span><span class="pu">[]</span> <span class="pa">array</span><span class="pu">) {</span></div>
<div class="no" style="left:2px;top:82.5px">4</div>
<div class="ln" style="left:93px;top:82.5px">        <span class="cm">// Edit your code here</span></div>
<div class="no" style="left:2px;top:110.0px">5</div>
<div class="no" style="left:2px;top:137.5px">6</div>
<div class="ln" style="left:93px;top:137.5px">        <span class="kw">return</span> <span class="nu">0</span><span class="pu">;</span></div>
<div class="no" style="left:2px;top:165.0px">7</div>
<div class="ln" style="left:93px;top:165.0px">    <span class="pu">}</span></div>
<div class="no" style="left:2px;top:192.5px">8</div>
<div class="no" style="left:2px;top:220.0px">9</div>
<div class="ln" style="left:93px;top:220.0px">    <span class="kw">public</span> <span class="kw">static</span> <span class="ty">void</span> <span class="fn">main</span><span class="pu">(</span><span class="ty">String</span><span class="pu">[]</span> <span class="pa">args</span><span class="pu">) {</span></div>
<div class="no" style="left:2px;top:247.5px">10</div>
<div class="ln" style="left:93px;top:247.5px">        <span class="cm">// Add your test cases here</span></div>
<div class="no" style="left:2px;top:275.0px">11</div>
<div class="no" style="left:2px;top:302.5px">12</div>
<div class="ln" style="left:93px;top:302.5px">        <span class="pa">System</span><span class="pu">.</span><span class="pa">out</span><span class="pu">.</span><span class="fn">println</span><span class="pu">(</span><span class="fn">solution</span><span class="pu">(</span><span class="kw">new</span> <span class="ty">int</span><span class="pu">[]{</span><span class="nu">1</span><span class="pu">,</span> <span class="nu">3</span><span class="pu">,</span> <span class="nu">8</span><span class="pu">,</span> <span class="nu">2</span><span class="pu">,</span> <span class="nu">3</span><span class="pu">,</span> <span class="nu">1</span><span class="pu">,</span> <span class="nu">3</span><span class="pu">,</span> <span class="nu">3</span><span class="pu">,</span> <span class="nu">3</span><span class="pu">}) ==</span> <span class="nu">3</span><span class="pu">);</span></div>
<div class="no" style="left:2px;top:330.0px">13</div>
<div class="ln" style="left:93px;top:330.0px">    <span class="pu">}</span></div>
<div class="no" style="left:2px;top:357.5px">14</div>
<div class="ln" style="left:93px;top:357.5px"><span class="pu">}</span></div>
<div class="no" style="left:2px;top:385.0px">15</div>
</div>
<div class="abs" style="left:834px;top:62px;width:9px;height:510px;border-radius:4.5px;background:#4a4b52;border:1px solid #6f7078"></div>
<div class="abs" style="left:93px;top:824px;width:700px;height:8.5px;border-radius:4.5px;background:#4b4c52;border:1px solid #85868d"></div></div>
<div class="abs" style="left:1873px;top:55px;width:39px;height:70px;border-radius:20px;border:2px solid #3c3e49;background:#24252a"><svg style="left:7px;top:11px" width="21" height="21" viewBox="0 0 21 21"><path d="M4.4 16.6 L12 9" stroke="#e86fa8" stroke-width="2.2" stroke-linecap="round"/><path d="M10 11 L12.4 8.6" stroke="#f5a254" stroke-width="2.2" stroke-linecap="round"/><path d="M10.6 1.6 V4.6" stroke="#6aa8f7" stroke-width="1.9" stroke-linecap="round"/><path d="M16.8 4.2 L14.8 6.2" stroke="#6aa8f7" stroke-width="1.9" stroke-linecap="round"/><path d="M4.4 4.2 L6.6 6.4" stroke="#f2c46a" stroke-width="1.9" stroke-linecap="round"/><path d="M16.4 10.4 H19.4" stroke="#f2c46a" stroke-width="1.9" stroke-linecap="round"/><path d="M14.6 14.6 L16.8 16.8" stroke="#f08a5a" stroke-width="1.9" stroke-linecap="round"/><path d="M1.6 10.4 H4.4" stroke="#f2c46a" stroke-width="1.9" stroke-linecap="round"/></svg><div class="abs" style="left:0;top:37px;width:35px;text-align:center;font-size:15px;font-weight:700;line-height:20px;color:#fff">AI</div></div>
<svg style="left:1883px;top:144px" width="19" height="19" viewBox="0 0 21 21"><path d="M6.6 6.4 C6.6 3.8 8.2 2.2 10.5 2.2 C12.8 2.2 14.4 3.8 14.4 6.4" fill="none" stroke="#fff" stroke-width="1.9"/><path d="M6.2 7.4 H14.8 V14 C14.8 16.8 13 18.6 10.5 18.6 C8 18.6 6.2 16.8 6.2 14 Z" fill="none" stroke="#fff" stroke-width="1.9" stroke-linejoin="round"/><path d="M10.5 8 V18 M1.6 12.4 H6 M15 12.4 H19.4 M2.4 6.6 L6 8.6 M18.6 6.6 L15 8.6 M2.4 18.4 L6.4 15.6 M18.6 18.4 L14.6 15.6" fill="none" stroke="#fff" stroke-width="1.9" stroke-linecap="round"/></svg>
<div class="status"><svg style="left:36px;top:6px" width="16" height="16" viewBox="0 0 16 16"><circle cx="8" cy="8" r="8" fill="#9a9ca9"/><path d="M5.4 5.4 L10.6 10.6 M10.6 5.4 L5.4 10.6" stroke="#3c3d47" stroke-width="1.7" stroke-linecap="round"/></svg><span style="left:56px">0</span><svg style="left:70px;top:6px" width="16" height="16" viewBox="0 0 16 16"><circle cx="8" cy="8" r="8" fill="#9a9ca9"/><path d="M8 3.8 V8.8" stroke="#3c3d47" stroke-width="1.9" stroke-linecap="round"/><circle cx="8" cy="11.8" r="1.1" fill="#3c3d47"/></svg><span style="left:90px">0</span><svg style="left:119px;top:5px" width="18" height="18" viewBox="0 0 18 18"><path d="M15 6.4 A6.6 6.6 0 0 0 3.2 5.6 M3 11.6 A6.6 6.6 0 0 0 14.8 12.4" fill="none" stroke="#9a9ca9" stroke-width="1.7" stroke-linecap="round"/><path d="M15.6 2.6 V6.6 H11.6 M2.4 15.4 V11.4 H6.4" fill="none" stroke="#9a9ca9" stroke-width="1.7" stroke-linecap="round" stroke-linejoin="round"/></svg><span style="left:140px">正在激活扩展...</span><span style="left:1617px">行 1，列 1</span><span style="left:1706px">空格: 4</span></div>
<div class="abs" style="left:0;top:926px;width:1920px;height:3px;background:#050506"></div>
</div>
<svg style="left:1804px;top:69px" width="64" height="64" viewBox="0 0 64 64"><defs><linearGradient id="rg" x1="0.1" y1="0.1" x2="0.9" y2="0.9"><stop offset="0" stop-color="#86d3ea"/><stop offset="0.45" stop-color="#a9b8e6"/><stop offset="0.62" stop-color="#d4a6df"/><stop offset="1" stop-color="#f3a0c4"/></linearGradient></defs><circle cx="32" cy="32" r="27.2" fill="#fff" fill-opacity="0.6" stroke="url(#rg)" stroke-width="4.6"/>
<path d="M20.4 20 L32.4 27 L44.4 20" fill="none" stroke="#000" stroke-width="6.4" stroke-linejoin="round" stroke-linecap="round"/><path d="M17 28.6 L27.2 34.6 V46.6" fill="none" stroke="#000" stroke-width="6.4" stroke-linejoin="round" stroke-linecap="round"/><path d="M47.8 28.6 L37.6 34.6 V46.6" fill="none" stroke="#000" stroke-width="6.4" stroke-linejoin="round" stroke-linecap="round"/></svg>
<div class="abs" style="left:419px;top:1000px;font-family:'Liberation Sans','Noto Sans CJK SC',sans-serif;font-weight:350;font-size:44.8px;line-height:64px;white-space:nowrap;color:#7d7d3a;opacity:0.92">想念你一<span style="color:#3d6896">切</span></div>
<svg style="left:1760px;top:970px" width="160" height="110" viewBox="0 0 160 110">
<path d="M90 8.4 L76.8 17.6 V24.6 L90 15.6 L103 24.6 V17.6 Z" fill="#80c8ee"/>
<path d="M89.6 16 V43" stroke="#3d4855" stroke-width="1.4"/>
<path d="M125 24.6 L112.2 33.4 V39.6 L125 31 L137.8 39.6 V33.4 Z" fill="#fff"/>
<path d="M124.6 31.6 V43" stroke="#60626a" stroke-width="1.4"/>
<path d="M142 18.4 L136 23 V26.4 L142 22 L148.4 26.4 V23 Z" fill="#1f9bd6"/>
<path d="M141.8 22.6 V43" stroke="#1a7fb5" stroke-width="1.4"/>
<path d="M77.6 36.4 L72.4 40.6 V43 L77.6 39 L82.8 43 V40.6 Z" fill="#1f9bd6"/>
</svg>
<div class="abs" style="left:1770px;top:1012px;width:150px;height:68px;background:#fbfdff;border:2px solid #6cc4ee;border-right:none;border-bottom:none;overflow:hidden">
<svg style="left:0;top:0" width="150" height="68" viewBox="0 0 150 68">
<path d="M66 0 V68 M76.6 0 V68 M100.6 0 V68 M117 0 V68 M131 0 V68" stroke="#d8e9f5" stroke-width="2"/>
<path d="M92 0 V68" stroke="#c5cfdd" stroke-width="2.4"/>
<path d="M92 -3 L64 15 V25 L92 8 L120 25 V15 Z" fill="#1b3c8c"/>
<path d="M137 17 L132 21 V22.6 L137 19 L142 22.600000000000001 V21 Z" fill="#d5e8f4"/>
<path d="M103 33 L94 39 V42.6 L103 36.6 L112 42.6 V39 Z" fill="#a5d6ee"/>
<path d="M59 40.6 L53 45.4 V48.6 L59 44 L65 48.6 V45.4 Z" fill="#2aa0d8"/>
<rect x="13" y="52" width="4" height="4" fill="#1b3c8c"/><path d="M9 55 L8 58" stroke="#1b3c8c" stroke-width="1.4"/>
</svg>
<div class="abs" style="left:11px;top:8px;font-size:21px;line-height:30px;color:#3f72cc;font-weight:400">中</div>
<div class="abs" style="left:27px;top:35px;font-size:22px;line-height:28px;color:#2c4a96;font-weight:500">简</div>
</div>
<div class="abs" style="left:1580px;top:1020.5px;font-family:'Liberation Sans','Noto Sans CJK SC',sans-serif;font-size:24.5px;line-height:34px;white-space:nowrap;color:#fff;text-shadow:1.5px 1.5px 1px rgba(0,0,0,0.85),0 0 2px rgba(0,0,0,0.5)">掘金技术社区 @ 在人间负债</div>
</body>
</html>
